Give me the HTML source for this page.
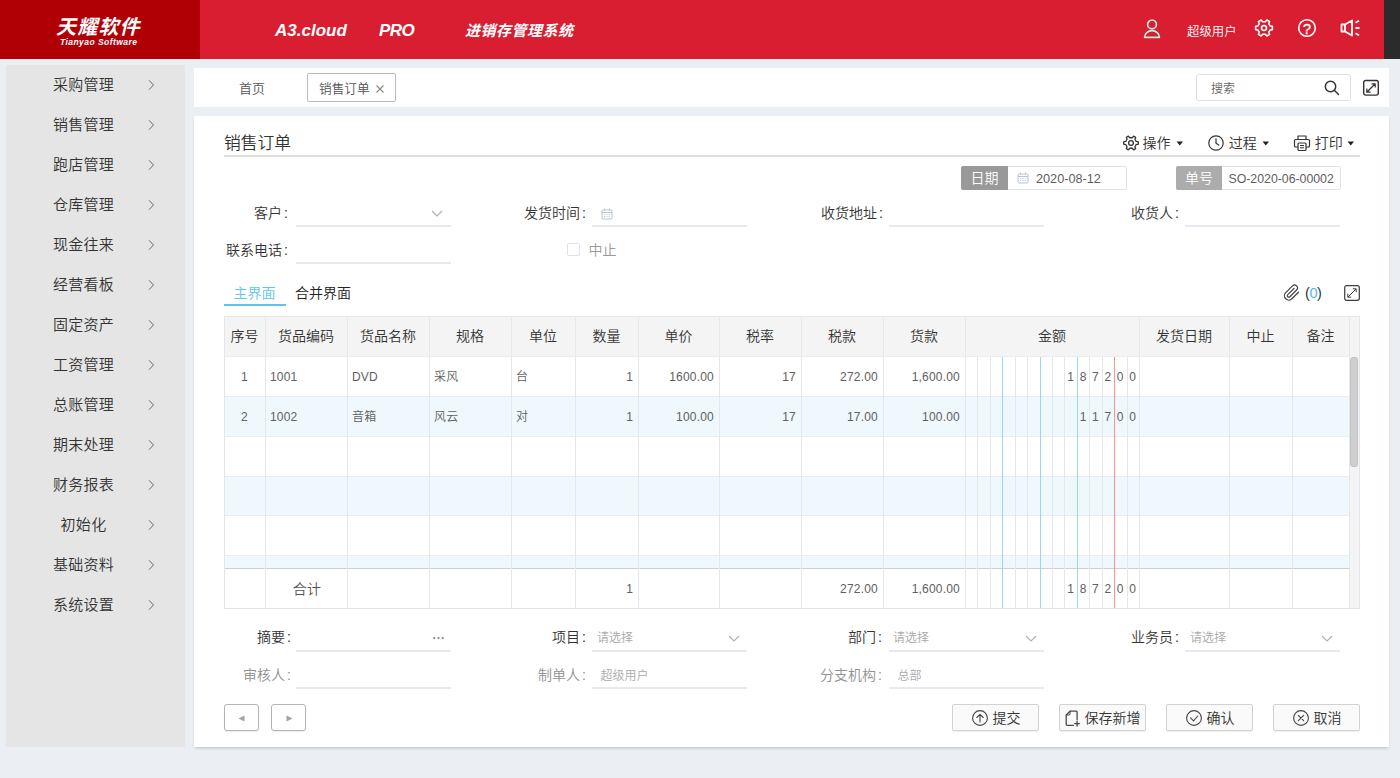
<!DOCTYPE html>
<html lang="zh-CN">
<head>
<meta charset="utf-8">
<title>销售订单</title>
<style>
*{box-sizing:border-box;margin:0;padding:0}
html,body{width:1400px;height:778px;overflow:hidden}
body{background:#ebeef3;font-family:"Liberation Sans","Noto Sans CJK SC",sans-serif;color:#333;font-size:13px;font-weight:350;position:relative}
.abs{position:absolute}
#hdr{position:absolute;left:0;top:0;width:1384px;height:59px;background:#d81e30}
#logo{position:absolute;left:0;top:0;width:200px;height:59px;background:#b00006;color:#fff}
#dark{position:absolute;left:1384px;top:0;width:16px;height:59px;background:#2b2b2b}
#logo .cn{position:absolute;left:56px;top:13.5px;font-size:20px;font-weight:700;font-style:italic;line-height:26px;letter-spacing:1.2px;white-space:nowrap}
#logo .en{position:absolute;left:60px;top:37px;font-size:8.5px;font-weight:700;font-style:italic;line-height:10px;letter-spacing:0.45px;white-space:nowrap}
.hn{position:absolute;top:21px;color:#fff;font-weight:700;font-style:italic;font-size:17px;line-height:20px;white-space:nowrap}
#side{position:absolute;left:6px;top:65px;width:179px;height:682px;background:#e5e5e5}
#side .mi{position:relative;height:40px;line-height:40px;font-size:15px;color:#333;letter-spacing:0.3px}
#side .mi span{position:absolute;left:0;width:155px;text-align:center;top:0px}
#side .mi svg{position:absolute;left:141px;top:14px}
#tabs{position:absolute;left:194px;top:68px;width:1195px;height:39px;background:#fff}
#main{position:absolute;left:194px;top:116px;width:1195px;height:631px;background:#fff;box-shadow:0 2px 3px -1px rgba(0,0,0,.22)}
.lbl{position:absolute;font-size:14px;line-height:20px;color:#333;text-align:right;white-space:nowrap}
.lbl i{font-style:normal;margin-left:2px}
.uline{position:absolute;height:2px;margin-top:-1px;background:#e7e9f0;width:155px}
.ph{position:absolute;font-size:12px;line-height:20px;color:#aaa;white-space:nowrap}
.th{position:absolute;top:0;height:40px;line-height:39px;text-align:center;font-size:14px;color:#333;white-space:nowrap}
.td{position:absolute;height:40px;line-height:43px;font-size:12px;letter-spacing:.2px;color:#606060;white-space:nowrap}
.btn{position:absolute;top:588px;height:27px;border:1px solid #c8c8c8;border-radius:2px;background:#fafafa;font-size:14px;line-height:25px;color:#333;white-space:nowrap}
.tb{position:absolute;top:16px;font-size:14px;line-height:20px;color:#333;white-space:nowrap}
</style>
</head>
<body>
<div id="hdr">
  <div id="logo"><div class="cn">天耀软件</div><div class="en">Tianyao Software</div></div>
  <div class="hn" style="left:275px">A3.cloud</div>
  <div class="hn" style="left:379px;letter-spacing:-0.5px">PRO</div>
  <div class="hn" style="left:465px;font-size:15px;letter-spacing:0.5px">进销存管理系统</div>
  <div class="abs" style="left:1187px;top:23.5px;color:#fff;font-size:12.4px;line-height:16px">超级用户</div>

<svg class="abs" style="left:1142px;top:18px" width="20" height="22" viewBox="0 0 20 22"><g fill="none" stroke="#c0eedd" stroke-width="1.700" stroke-linejoin="round"><circle cx="10" cy="6.400" r="4.400"/><path d="M2.600 19.300 A7.400 6.600 0 0 1 17.400 19.300 Z"/></g></svg>
<svg class="abs" style="left:1254px;top:18px" width="20" height="20" viewBox="0 0 20 20"><g fill="none" stroke="#fff" stroke-width="1.6" stroke-linejoin="round"><path d="M16.09 8.02 L18.35 8.41 L18.35 11.59 L16.09 11.98 L14.76 14.28 L15.55 16.43 L12.80 18.03 L11.33 16.26 L8.67 16.26 L7.20 18.03 L4.45 16.43 L5.24 14.28 L3.91 11.98 L1.65 11.59 L1.65 8.41 L3.91 8.02 L5.24 5.72 L4.45 3.57 L7.20 1.97 L8.67 3.74 L11.33 3.74 L12.80 1.97 L15.55 3.57 L14.76 5.72 Z"/><circle cx="10" cy="10" r="2.500"/></g></svg>
<svg class="abs" style="left:1297px;top:18px" width="20" height="20" viewBox="0 0 20 20"><circle cx="10" cy="10" r="8.3" fill="none" stroke="#fff" stroke-width="1.6"/><text x="10" y="15.700" text-anchor="middle" font-family="Liberation Sans, sans-serif" font-size="15" fill="#fff" stroke="#fff" stroke-width="0.300">?</text></svg>
<svg class="abs" style="left:1339px;top:18px" width="22" height="20" viewBox="0 0 22 20"><g fill="none" stroke="#fff" stroke-width="1.8" stroke-linejoin="round" stroke-linecap="butt"><path d="M2.500 6.500 H6 L13 2.500 V17.500 L6 13.500 H2.500 Z"/><path d="M6 6.500 V13.500"/><path d="M16.500 4.800 L20 2.800 M16.500 10 H20.500 M16.500 15.200 L20 17.200"/></g></svg>

</div>
<div id="dark"></div>
<div id="side">
  <div class="mi"><span>采购管理</span><svg width="8" height="12" viewBox="0 0 8 12"><path d="M2 1.3 L6.5 6 L2 10.7" fill="none" stroke="#667" stroke-width="1"/></svg></div>
  <div class="mi"><span>销售管理</span><svg width="8" height="12" viewBox="0 0 8 12"><path d="M2 1.3 L6.5 6 L2 10.7" fill="none" stroke="#667" stroke-width="1"/></svg></div>
  <div class="mi"><span>跑店管理</span><svg width="8" height="12" viewBox="0 0 8 12"><path d="M2 1.3 L6.5 6 L2 10.7" fill="none" stroke="#667" stroke-width="1"/></svg></div>
  <div class="mi"><span>仓库管理</span><svg width="8" height="12" viewBox="0 0 8 12"><path d="M2 1.3 L6.5 6 L2 10.7" fill="none" stroke="#667" stroke-width="1"/></svg></div>
  <div class="mi"><span>现金往来</span><svg width="8" height="12" viewBox="0 0 8 12"><path d="M2 1.3 L6.5 6 L2 10.7" fill="none" stroke="#667" stroke-width="1"/></svg></div>
  <div class="mi"><span>经营看板</span><svg width="8" height="12" viewBox="0 0 8 12"><path d="M2 1.3 L6.5 6 L2 10.7" fill="none" stroke="#667" stroke-width="1"/></svg></div>
  <div class="mi"><span>固定资产</span><svg width="8" height="12" viewBox="0 0 8 12"><path d="M2 1.3 L6.5 6 L2 10.7" fill="none" stroke="#667" stroke-width="1"/></svg></div>
  <div class="mi"><span>工资管理</span><svg width="8" height="12" viewBox="0 0 8 12"><path d="M2 1.3 L6.5 6 L2 10.7" fill="none" stroke="#667" stroke-width="1"/></svg></div>
  <div class="mi"><span>总账管理</span><svg width="8" height="12" viewBox="0 0 8 12"><path d="M2 1.3 L6.5 6 L2 10.7" fill="none" stroke="#667" stroke-width="1"/></svg></div>
  <div class="mi"><span>期末处理</span><svg width="8" height="12" viewBox="0 0 8 12"><path d="M2 1.3 L6.5 6 L2 10.7" fill="none" stroke="#667" stroke-width="1"/></svg></div>
  <div class="mi"><span>财务报表</span><svg width="8" height="12" viewBox="0 0 8 12"><path d="M2 1.3 L6.5 6 L2 10.7" fill="none" stroke="#667" stroke-width="1"/></svg></div>
  <div class="mi"><span>初始化</span><svg width="8" height="12" viewBox="0 0 8 12"><path d="M2 1.3 L6.5 6 L2 10.7" fill="none" stroke="#667" stroke-width="1"/></svg></div>
  <div class="mi"><span>基础资料</span><svg width="8" height="12" viewBox="0 0 8 12"><path d="M2 1.3 L6.5 6 L2 10.7" fill="none" stroke="#667" stroke-width="1"/></svg></div>
  <div class="mi"><span>系统设置</span><svg width="8" height="12" viewBox="0 0 8 12"><path d="M2 1.3 L6.5 6 L2 10.7" fill="none" stroke="#667" stroke-width="1"/></svg></div>
</div>
<div id="tabs">
  <div class="abs" style="left:45px;top:12px;font-size:13px;line-height:18px;color:#555">首页</div>
  <div class="abs" style="left:113px;top:5px;width:89px;height:29px;border:1px solid #bbb;border-radius:2px"></div>
  <div class="abs" style="left:125px;top:12px;font-size:12.7px;line-height:18px;color:#555">销售订单</div>
  <svg class="abs" style="left:181px;top:16px" width="10" height="10" viewBox="0 0 10 10"><path d="M1.5 1.5 L8.500 8.500 M8.500 1.5 L1.5 8.500" stroke="#888" stroke-width="1.1" fill="none"/></svg>
  <div class="abs" style="left:1002px;top:6px;width:155px;height:27px;border:1px solid #dcdfe6;border-radius:3px"></div>
  <div class="abs" style="left:1017px;top:12.500px;font-size:12px;line-height:16px;color:#666">搜索</div>
  <svg class="abs" style="left:1129px;top:11px" width="18" height="18" viewBox="0 0 18 18"><g fill="none" stroke="#333" stroke-width="1.5" stroke-linecap="round"><circle cx="7.5" cy="7.5" r="5.2"/><path d="M11.3 11.3 L15.500 15.500"/></g></svg>
  <svg class="abs" style="left:1168px;top:11px" width="18" height="18" viewBox="0 0 18 18"><g fill="none" stroke="#333" stroke-width="1.4" stroke-linejoin="round"><rect x="1.7" y="1.5" width="14.6" height="14.6" rx="2"/><path d="M5 13 L13 5 M9.500 4.800 H13.2 V8.500 M4.800 9.500 V13.2 H8.500" stroke-width="1.2"/></g></svg>
</div>

<div id="main">
<div class="abs" style="left:30px;top:17px;font-size:16.8px;line-height:22px;color:#333">销售订单</div>
<div class="abs" style="left:30px;top:39px;width:1136px;height:2px;background:#dfdfdf"></div>
<div class="lbl" style="right:1101px;top:87px;color:#333">客户<i>:</i></div>
<div class="uline" style="left:102px;top:110px;width:155px"></div>
<div class="lbl" style="right:803px;top:87px;color:#333">发货时间<i>:</i></div>
<div class="uline" style="left:398px;top:110px;width:155px"></div>
<div class="lbl" style="right:506px;top:87px;color:#333">收货地址<i>:</i></div>
<div class="uline" style="left:695px;top:110px;width:155px"></div>
<div class="lbl" style="right:210px;top:87px;color:#333">收货人<i>:</i></div>
<div class="uline" style="left:991px;top:110px;width:155px"></div>
<div class="lbl" style="right:1101px;top:124px;color:#333">联系电话<i>:</i></div>
<div class="uline" style="left:102px;top:147px;width:155px"></div>
<div class="lbl" style="right:1098px;top:511px;color:#333">摘要<i>:</i></div>
<div class="uline" style="left:102px;top:535px;width:155px"></div>
<div class="lbl" style="right:803px;top:511px;color:#333">项目<i>:</i></div>
<div class="uline" style="left:398px;top:535px;width:155px"></div>
<div class="lbl" style="right:507px;top:511px;color:#333">部门<i>:</i></div>
<div class="uline" style="left:695px;top:535px;width:155px"></div>
<div class="lbl" style="right:210px;top:511px;color:#333">业务员<i>:</i></div>
<div class="uline" style="left:991px;top:535px;width:155px"></div>
<div class="lbl" style="right:1098px;top:549px;color:#909090">审核人<i>:</i></div>
<div class="uline" style="left:102px;top:572px;width:155px"></div>
<div class="lbl" style="right:803px;top:549px;color:#909090">制单人<i>:</i></div>
<div class="uline" style="left:398px;top:572px;width:155px"></div>
<div class="lbl" style="right:507px;top:549px;color:#909090">分支机构<i>:</i></div>
<div class="uline" style="left:695px;top:572px;width:155px"></div>
<div id="grid" style="position:absolute;left:30px;top:200px;width:1136px;height:293px;border:1px solid #e3e5ea;overflow:hidden;background:#fff">
<div class="abs" style="left:0;top:0;width:1136px;height:40px;background:#f4f4f4"></div>
<div class="abs" style="left:0;top:39px;width:1125px;height:40px;background:#fff;border-top:1px solid #e9edf1"></div>
<div class="abs" style="left:0;top:79px;width:1125px;height:40px;background:#eff8fc;border-top:1px solid #e9edf1"></div>
<div class="abs" style="left:0;top:119px;width:1125px;height:40px;background:#fff;border-top:1px solid #e9edf1"></div>
<div class="abs" style="left:0;top:159px;width:1125px;height:39px;background:#eff8fc;border-top:1px solid #e9edf1"></div>
<div class="abs" style="left:0;top:198px;width:1125px;height:40px;background:#fff;border-top:1px solid #e9edf1"></div>
<div class="abs" style="left:0;top:238px;width:1125px;height:13px;background:#eff8fc;border-top:1px solid #e9edf1"></div>
<div class="abs" style="left:0;top:251px;width:1125px;height:41px;background:#fff;border-top:1px solid #cecece"></div>
<div class="abs" style="left:40px;top:0;width:1px;height:292px;background:#e5e7ec"></div>
<div class="abs" style="left:122px;top:0;width:1px;height:292px;background:#e5e7ec"></div>
<div class="abs" style="left:204px;top:0;width:1px;height:292px;background:#e5e7ec"></div>
<div class="abs" style="left:286px;top:0;width:1px;height:292px;background:#e5e7ec"></div>
<div class="abs" style="left:350px;top:0;width:1px;height:292px;background:#e5e7ec"></div>
<div class="abs" style="left:413px;top:0;width:1px;height:292px;background:#e5e7ec"></div>
<div class="abs" style="left:494px;top:0;width:1px;height:292px;background:#e5e7ec"></div>
<div class="abs" style="left:576px;top:0;width:1px;height:292px;background:#e5e7ec"></div>
<div class="abs" style="left:658px;top:0;width:1px;height:292px;background:#e5e7ec"></div>
<div class="abs" style="left:740px;top:0;width:1px;height:292px;background:#e5e7ec"></div>
<div class="abs" style="left:914px;top:0;width:1px;height:292px;background:#e5e7ec"></div>
<div class="abs" style="left:1004px;top:0;width:1px;height:292px;background:#e5e7ec"></div>
<div class="abs" style="left:1067px;top:0;width:1px;height:292px;background:#e5e7ec"></div>
<div class="abs" style="left:1124px;top:0;width:1px;height:292px;background:#e5e7ec"></div>
<div class="abs" style="left:752.4px;top:40px;width:1px;height:252px;background:#e5e7ec"></div>
<div class="abs" style="left:764.9px;top:40px;width:1px;height:252px;background:#e5e7ec"></div>
<div class="abs" style="left:777.3px;top:40px;width:1px;height:252px;background:#9ad4f6"></div>
<div class="abs" style="left:789.7px;top:40px;width:1px;height:252px;background:#e5e7ec"></div>
<div class="abs" style="left:802.1px;top:40px;width:1px;height:252px;background:#e5e7ec"></div>
<div class="abs" style="left:814.6px;top:40px;width:1px;height:252px;background:#9ad4f6"></div>
<div class="abs" style="left:827.0px;top:40px;width:1px;height:252px;background:#e5e7ec"></div>
<div class="abs" style="left:839.4px;top:40px;width:1px;height:252px;background:#e5e7ec"></div>
<div class="abs" style="left:851.9px;top:40px;width:1px;height:252px;background:#9ad4f6"></div>
<div class="abs" style="left:864.3px;top:40px;width:1px;height:252px;background:#e5e7ec"></div>
<div class="abs" style="left:876.7px;top:40px;width:1px;height:252px;background:#e5e7ec"></div>
<div class="abs" style="left:889.1px;top:40px;width:1px;height:252px;background:#f59494"></div>
<div class="abs" style="left:901.6px;top:40px;width:1px;height:252px;background:#e5e7ec"></div>
<div class="th" style="left:-1px;width:41px">序号</div>
<div class="th" style="left:40px;width:82px">货品编码</div>
<div class="th" style="left:122px;width:82px">货品名称</div>
<div class="th" style="left:204px;width:82px">规格</div>
<div class="th" style="left:286px;width:64px">单位</div>
<div class="th" style="left:350px;width:63px">数量</div>
<div class="th" style="left:413px;width:81px">单价</div>
<div class="th" style="left:494px;width:82px">税率</div>
<div class="th" style="left:576px;width:82px">税款</div>
<div class="th" style="left:658px;width:82px">货款</div>
<div class="th" style="left:740px;width:174px">金额</div>
<div class="th" style="left:914px;width:90px">发货日期</div>
<div class="th" style="left:1004px;width:63px">中止</div>
<div class="th" style="left:1067px;width:57px">备注</div>
<div class="td" style="left:-1px;width:41px;top:39.0px;text-align:center">1</div>
<div class="td" style="left:40px;width:82px;top:39.0px;text-align:left;padding-left:5px">1001</div>
<div class="td" style="left:122px;width:82px;top:39.0px;text-align:left;padding-left:5px">DVD</div>
<div class="td" style="left:204px;width:82px;top:39.0px;text-align:left;padding-left:5px">采风</div>
<div class="td" style="left:286px;width:64px;top:39.0px;text-align:left;padding-left:5px">台</div>
<div class="td" style="left:350px;width:63px;top:39.0px;text-align:right;padding-right:5px">1</div>
<div class="td" style="left:413px;width:81px;top:39.0px;text-align:right;padding-right:5px">1600.00</div>
<div class="td" style="left:494px;width:82px;top:39.0px;text-align:right;padding-right:5px">17</div>
<div class="td" style="left:576px;width:82px;top:39.0px;text-align:right;padding-right:5px">272.00</div>
<div class="td" style="left:658px;width:82px;top:39.0px;text-align:right;padding-right:5px">1,600.00</div>
<div class="td" style="left:839.4px;width:12.4px;top:39.0px;text-align:center">1</div>
<div class="td" style="left:851.9px;width:12.4px;top:39.0px;text-align:center">8</div>
<div class="td" style="left:864.3px;width:12.4px;top:39.0px;text-align:center">7</div>
<div class="td" style="left:876.7px;width:12.4px;top:39.0px;text-align:center">2</div>
<div class="td" style="left:889.1px;width:12.4px;top:39.0px;text-align:center">0</div>
<div class="td" style="left:901.6px;width:12.4px;top:39.0px;text-align:center">0</div>
<div class="td" style="left:-1px;width:41px;top:79.0px;text-align:center">2</div>
<div class="td" style="left:40px;width:82px;top:79.0px;text-align:left;padding-left:5px">1002</div>
<div class="td" style="left:122px;width:82px;top:79.0px;text-align:left;padding-left:5px">音箱</div>
<div class="td" style="left:204px;width:82px;top:79.0px;text-align:left;padding-left:5px">风云</div>
<div class="td" style="left:286px;width:64px;top:79.0px;text-align:left;padding-left:5px">对</div>
<div class="td" style="left:350px;width:63px;top:79.0px;text-align:right;padding-right:5px">1</div>
<div class="td" style="left:413px;width:81px;top:79.0px;text-align:right;padding-right:5px">100.00</div>
<div class="td" style="left:494px;width:82px;top:79.0px;text-align:right;padding-right:5px">17</div>
<div class="td" style="left:576px;width:82px;top:79.0px;text-align:right;padding-right:5px">17.00</div>
<div class="td" style="left:658px;width:82px;top:79.0px;text-align:right;padding-right:5px">100.00</div>
<div class="td" style="left:851.9px;width:12.4px;top:79.0px;text-align:center">1</div>
<div class="td" style="left:864.3px;width:12.4px;top:79.0px;text-align:center">1</div>
<div class="td" style="left:876.7px;width:12.4px;top:79.0px;text-align:center">7</div>
<div class="td" style="left:889.1px;width:12.4px;top:79.0px;text-align:center">0</div>
<div class="td" style="left:901.6px;width:12.4px;top:79.0px;text-align:center">0</div>
<div class="td" style="left:41px;width:82px;top:250.5px;text-align:center;font-size:14px;color:#555">合计</div>
<div class="td" style="left:350px;width:63px;top:250.5px;text-align:right;padding-right:5px">1</div>
<div class="td" style="left:576px;width:82px;top:250.5px;text-align:right;padding-right:5px">272.00</div>
<div class="td" style="left:658px;width:82px;top:250.5px;text-align:right;padding-right:5px">1,600.00</div>
<div class="td" style="left:839.4px;width:12.4px;top:250.5px;text-align:center">1</div>
<div class="td" style="left:851.9px;width:12.4px;top:250.5px;text-align:center">8</div>
<div class="td" style="left:864.3px;width:12.4px;top:250.5px;text-align:center">7</div>
<div class="td" style="left:876.7px;width:12.4px;top:250.5px;text-align:center">2</div>
<div class="td" style="left:889.1px;width:12.4px;top:250.5px;text-align:center">0</div>
<div class="td" style="left:901.6px;width:12.4px;top:250.5px;text-align:center">0</div>
<div class="abs" style="left:1125px;top:0;width:11px;height:292px;background:#f4f4f4"></div>
<div class="abs" style="left:1125px;top:40px;width:8px;height:110px;background:#cfcfcf;border:1px solid #c2c2c2;border-radius:3px"></div>
</div>
<svg class="abs" style="left:927.7px;top:17.5px" width="18" height="18" viewBox="0 0 18 18"><g fill="none" stroke="#333" stroke-width="1.3" stroke-linejoin="round"><path d="M14.18 7.47 L16.31 7.84 L16.31 10.16 L14.18 10.53 L12.92 12.72 L13.66 14.75 L11.65 15.91 L10.26 14.25 L7.74 14.25 L6.35 15.91 L4.34 14.75 L5.08 12.72 L3.82 10.53 L1.69 10.16 L1.69 7.84 L3.82 7.47 L5.08 5.28 L4.34 3.25 L6.35 2.09 L7.74 3.75 L10.26 3.75 L11.65 2.09 L13.66 3.25 L12.92 5.28 Z"/><circle cx="9" cy="9" r="2.4"/></g></svg>
<div class="abs" style="left:948.5px;top:17px;font-size:14px;line-height:20px;color:#333;white-space:nowrap;">操作</div>
<svg class="abs" style="left:982px;top:25px" width="8" height="5" viewBox="0 0 8 5"><path d="M0.500 0.500 H7 L3.750 4.500 Z" fill="#222"/></svg>
<svg class="abs" style="left:1013px;top:17.5px" width="18" height="18" viewBox="0 0 18 18"><g fill="none" stroke="#333" stroke-width="1.2" stroke-linecap="round" stroke-linejoin="round"><circle cx="9" cy="9" r="7.2"/><path d="M9 4.800 V9.300 L11.800 11"/></g></svg>
<div class="abs" style="left:1034.8px;top:17px;font-size:14px;line-height:20px;color:#333;white-space:nowrap;">过程</div>
<svg class="abs" style="left:1068.3px;top:25px" width="8" height="5" viewBox="0 0 8 5"><path d="M0.500 0.500 H7 L3.750 4.500 Z" fill="#222"/></svg>
<svg class="abs" style="left:1099px;top:17.5px" width="18" height="18" viewBox="0 0 18 18"><g fill="none" stroke="#333" stroke-width="1.2" stroke-linejoin="round"><path d="M5 5.500 V2 H13 V5.500"/><path d="M5 13 H2.800 Q1.5 13 1.5 11.700 V6.800 Q1.5 5.500 2.800 5.500 H15.200 Q16.500 5.500 16.500 6.800 V11.700 Q16.500 13 15.200 13 H13"/><rect x="5" y="9" width="8" height="7.500" rx="1"/><path d="M7 11.500 H11 M7 13.800 H11" stroke-width="1"/></g></svg>
<div class="abs" style="left:1120.8px;top:17px;font-size:14px;line-height:20px;color:#333;white-space:nowrap;">打印</div>
<svg class="abs" style="left:1153.3px;top:25px" width="8" height="5" viewBox="0 0 8 5"><path d="M0.500 0.500 H7 L3.750 4.500 Z" fill="#222"/></svg>
<div class="abs" style="left:767px;top:50px;width:166px;height:24px;border:1px solid #e0e3ea;border-radius:2px;background:#fff"></div>
<div class="abs" style="left:767px;top:50px;width:47px;height:24px;background:#999;border-radius:2px 0 0 2px;color:#fff;font-size:14px;line-height:24px;text-align:center">日期</div>
<svg class="abs" style="left:822.5px;top:56px" width="12" height="12" viewBox="0 0 12 12"><g fill="none" stroke="#b9c3d6" stroke-width="1"><rect x="1" y="2" width="10" height="9" rx="1"/><path d="M1 4.500 H11 M3.500 0.500 V2.500 M8.500 0.500 V2.500"/><path d="M3 6.500 H9 M3 8.500 H9" stroke-width="0.8" stroke-dasharray="1.200 1.200"/></g></svg>
<div class="abs" style="left:842px;top:54px;font-size:12.7px;line-height:18px;color:#5e5e5e;white-space:nowrap;">2020-08-12</div>
<div class="abs" style="left:982px;top:50px;width:165px;height:24px;border:1px solid #e0e3ea;border-radius:2px;background:#fff"></div>
<div class="abs" style="left:982px;top:50px;width:46px;height:24px;background:#acacac;border-radius:2px 0 0 2px;color:#fff;font-size:14px;line-height:24px;text-align:center">单号</div>
<div class="abs" style="left:1034.5px;top:54px;font-size:12.3px;line-height:18px;color:#5e5e5e;white-space:nowrap;">SO-2020-06-00002</div>
<svg class="abs" style="left:237px;top:93.5px" width="12" height="8" viewBox="0 0 12 8"><path d="M1 1 L6 6 L11 1" fill="none" stroke="#b0b0b0" stroke-width="1.1"/></svg>
<svg class="abs" style="left:533.5px;top:518.5px" width="12" height="8" viewBox="0 0 12 8"><path d="M1 1 L6 6 L11 1" fill="none" stroke="#b0b0b0" stroke-width="1.1"/></svg>
<svg class="abs" style="left:830.5px;top:518.5px" width="12" height="8" viewBox="0 0 12 8"><path d="M1 1 L6 6 L11 1" fill="none" stroke="#b0b0b0" stroke-width="1.1"/></svg>
<svg class="abs" style="left:1126.5px;top:518.5px" width="12" height="8" viewBox="0 0 12 8"><path d="M1 1 L6 6 L11 1" fill="none" stroke="#b0b0b0" stroke-width="1.1"/></svg>
<svg class="abs" style="left:406.5px;top:91.5px" width="12" height="12" viewBox="0 0 12 12"><g fill="none" stroke="#b9c3d6" stroke-width="1"><rect x="1" y="2" width="10" height="9" rx="1"/><path d="M1 4.500 H11 M3.500 0.500 V2.500 M8.500 0.500 V2.500"/><path d="M3 6.500 H9 M3 8.500 H9" stroke-width="0.8" stroke-dasharray="1.200 1.200"/></g></svg>
<div class="abs" style="left:373px;top:127px;width:13px;height:13px;border:1px solid #e0e3ea;border-radius:2px;background:#fff"></div>
<div class="abs" style="left:394.5px;top:124px;font-size:14px;line-height:20px;color:#999;white-space:nowrap;">中止</div>
<div class="abs" style="left:39.5px;top:167px;font-size:14px;line-height:20px;color:#5fc4ee;white-space:nowrap;">主界面</div>
<div class="abs" style="left:30px;top:188px;width:62px;height:2px;background:#5bc5f2"></div>
<div class="abs" style="left:101px;top:167px;font-size:14px;line-height:20px;color:#222;white-space:nowrap;">合并界面</div>
<svg class="abs" style="left:1088.9px;top:168.3px" width="17.5" height="17.5" viewBox="0 0 24 24"><path d="M21.44 11.05l-9.19 9.19a6 6 0 0 1-8.49-8.49l9.19-9.19a4 4 0 0 1 5.66 5.66l-9.2 9.19a2 2 0 0 1-2.83-2.83l8.49-8.480" fill="none" stroke="#444" stroke-width="1.7" stroke-linecap="round" stroke-linejoin="round"/></svg>
<div class="abs" style="left:1111.0px;top:166.5px;font-size:14.5px;line-height:20px;color:#333;white-space:nowrap;letter-spacing:-0.4px">(<span style="color:#4db8f0">0</span>)</div>
<svg class="abs" style="left:1149.2px;top:168px" width="18" height="18" viewBox="0 0 18 18"><g fill="none" stroke="#3c3c3c" stroke-width="1.2" stroke-linejoin="round"><rect x="1.700" y="1.700" width="14.600" height="14.600" rx="2"/><path d="M5 13 L13 5 M9.800 4.800 H13.200 V8.200 M4.800 9.800 V13.200 H8.200" stroke-width="1"/></g></svg>
<div class="abs" style="left:238.5px;top:512px;font-size:12px;line-height:20px;color:#888;white-space:nowrap;letter-spacing:0.3px;font-weight:bold">···</div>
<div class="abs" style="left:403px;top:511.5px;font-size:12px;line-height:20px;color:#aaa;white-space:nowrap;">请选择</div>
<div class="abs" style="left:699px;top:511.5px;font-size:12px;line-height:20px;color:#aaa;white-space:nowrap;">请选择</div>
<div class="abs" style="left:996px;top:511.5px;font-size:12px;line-height:20px;color:#aaa;white-space:nowrap;">请选择</div>
<div class="abs" style="left:406.5px;top:550px;font-size:12px;line-height:20px;color:#aaa;white-space:nowrap;">超级用户</div>
<div class="abs" style="left:703.5px;top:550px;font-size:12px;line-height:20px;color:#aaa;white-space:nowrap;">总部</div>
<div class="abs" style="left:30px;top:588px;width:35px;height:27px;border:1px solid #b4b4b4;border-radius:3px;box-shadow:0 1px 1px rgba(0,0,0,.08);background:#fff"></div>
<div class="abs" style="left:77px;top:588px;width:35px;height:27px;border:1px solid #b4b4b4;border-radius:3px;box-shadow:0 1px 1px rgba(0,0,0,.08);background:#fff"></div>
<svg class="abs" style="left:43.5px;top:598.5px" width="7" height="7" viewBox="0 0 7 7"><path d="M6.500 0.500 V6.500 L0.500 3.500 Z" fill="#a3a3a3"/></svg>
<svg class="abs" style="left:91.5px;top:598.5px" width="7" height="7" viewBox="0 0 7 7"><path d="M0.500 0.500 V6.500 L6.500 3.500 Z" fill="#a3a3a3"/></svg>
<div class="abs" style="left:758px;top:588px;width:87px;height:27px;border:1px solid #d2d2d2;border-radius:2px;background:#fafafa;box-shadow:0 1px 1px rgba(0,0,0,.06)"></div>
<div class="abs" style="left:865px;top:588px;width:87px;height:27px;border:1px solid #d2d2d2;border-radius:2px;background:#fafafa;box-shadow:0 1px 1px rgba(0,0,0,.06)"></div>
<div class="abs" style="left:972px;top:588px;width:87px;height:27px;border:1px solid #d2d2d2;border-radius:2px;background:#fafafa;box-shadow:0 1px 1px rgba(0,0,0,.06)"></div>
<div class="abs" style="left:1079px;top:588px;width:87px;height:27px;border:1px solid #d2d2d2;border-radius:2px;background:#fafafa;box-shadow:0 1px 1px rgba(0,0,0,.06)"></div>
<svg class="abs" style="left:777px;top:593px" width="18" height="18" viewBox="0 0 18 18"><g fill="none" stroke="#444" stroke-width="1.1" stroke-linecap="round" stroke-linejoin="round"><circle cx="9" cy="9" r="7.400"/><path d="M9 13 V5.500 M5.800 8.500 L9 5.300 L12.200 8.500"/></g></svg>
<div class="abs" style="left:798.5px;top:592px;font-size:14px;line-height:20px;color:#333;white-space:nowrap;">提交</div>
<svg class="abs" style="left:870px;top:593px" width="18" height="18" viewBox="0 0 18 18"><g fill="none" stroke="#4a4a4a" stroke-width="1.3" stroke-linecap="round" stroke-linejoin="round"><path d="M9.500 16.300 H3.300 Q2.200 16.300 2.200 15.200 V6 L6 2.200 H12 Q13.100 2.200 13.100 3.300 V10.500"/><path d="M2.200 6 H5 Q6 6 6 5 V2.200" stroke-width="1"/><path d="M13.100 12.200 V17 M10.700 14.600 H15.500" stroke-width="1.400"/></g></svg>
<div class="abs" style="left:890.5px;top:592px;font-size:14px;line-height:20px;color:#333;white-space:nowrap;">保存新增</div>
<svg class="abs" style="left:991px;top:593px" width="18" height="18" viewBox="0 0 18 18"><g fill="none" stroke="#444" stroke-width="1.1" stroke-linecap="round" stroke-linejoin="round"><circle cx="9" cy="9" r="7.400"/><path d="M5.500 8.800 L8.500 11.800 L12.800 7"/></g></svg>
<div class="abs" style="left:1012.5px;top:592px;font-size:14px;line-height:20px;color:#333;white-space:nowrap;">确认</div>
<svg class="abs" style="left:1097.5px;top:593px" width="18" height="18" viewBox="0 0 18 18"><g fill="none" stroke="#444" stroke-width="1.1" stroke-linecap="round" stroke-linejoin="round"><circle cx="9" cy="9" r="7.400"/><path d="M6.300 6.300 L11.700 11.700 M11.700 6.300 L6.300 11.700"/></g></svg>
<div class="abs" style="left:1119.5px;top:592px;font-size:14px;line-height:20px;color:#333;white-space:nowrap;">取消</div>
</div>
</body>
</html>
